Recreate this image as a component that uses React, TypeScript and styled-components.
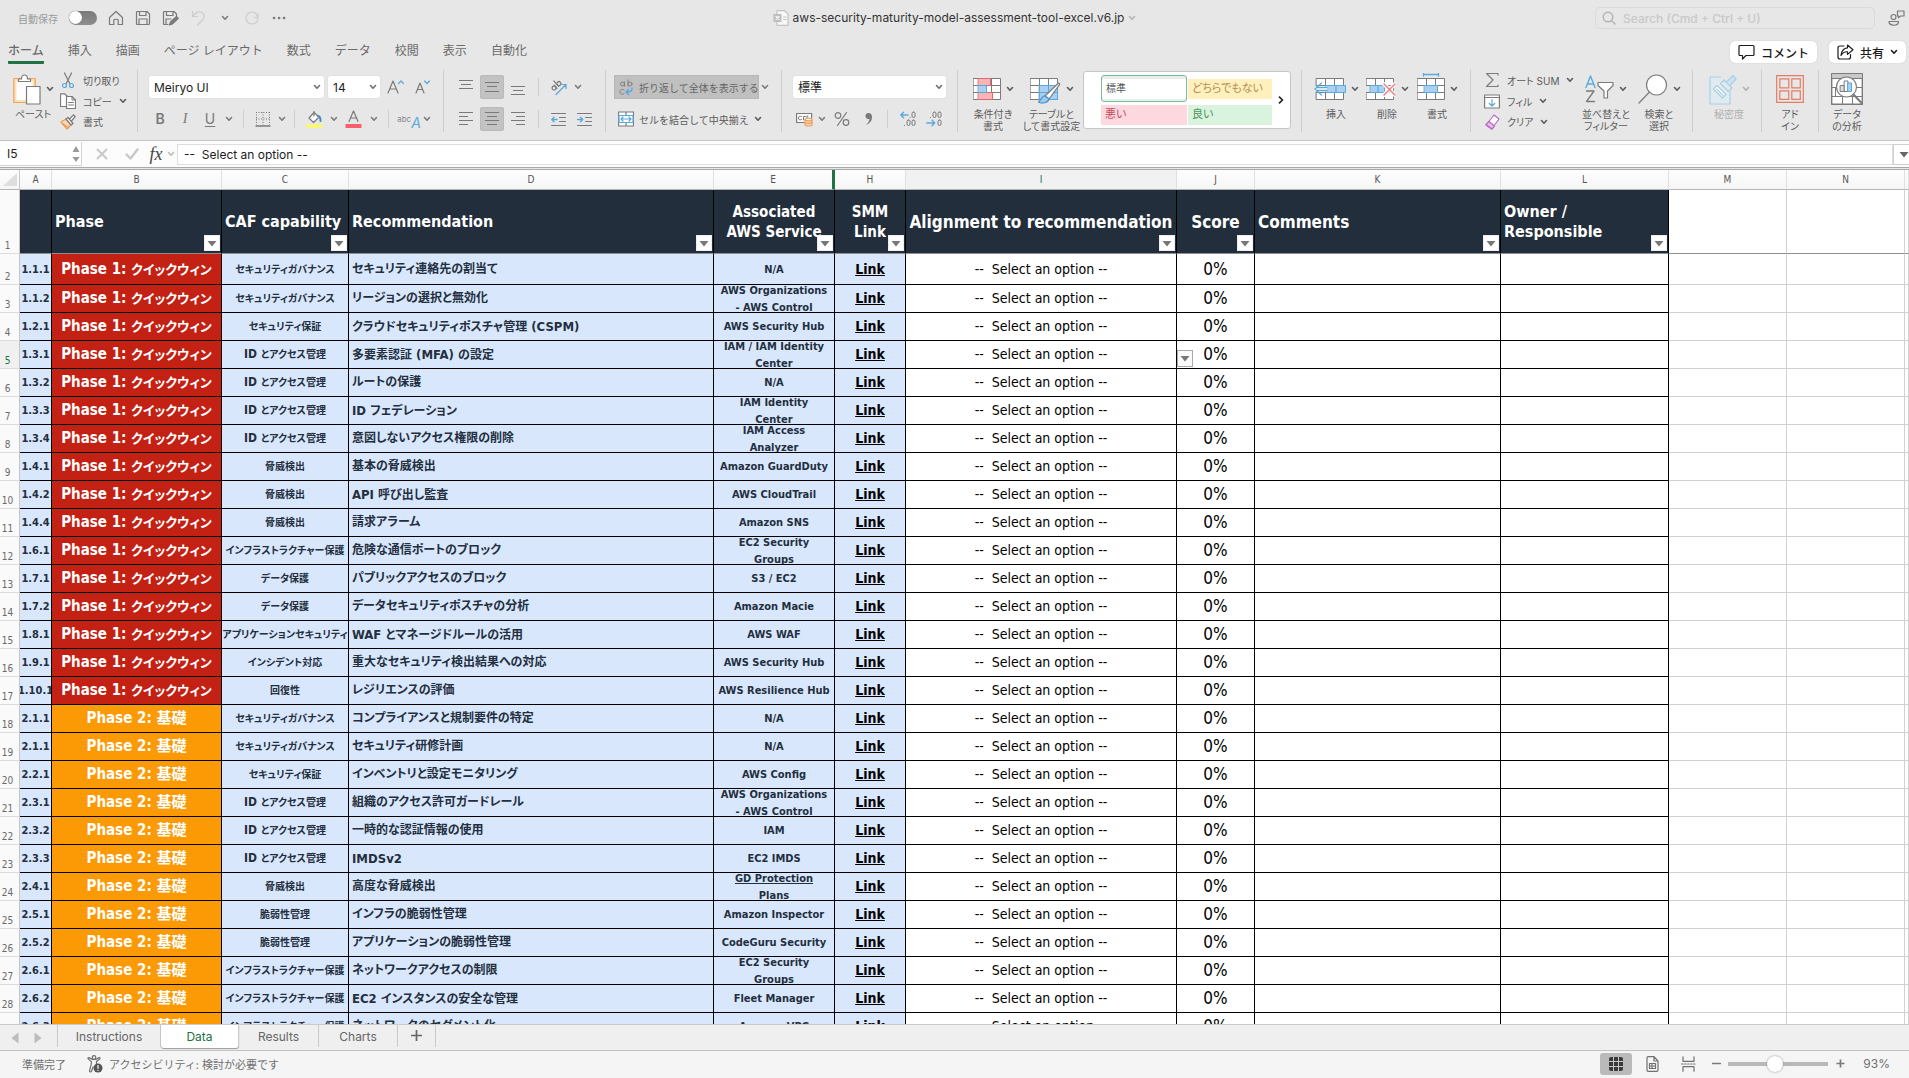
import React from "react";
import styled, { createGlobalStyle, css } from "styled-components";

const uiFont = `Inter, "Noto Sans CJK JP", sans-serif`;
const sheetFont = `"DejaVu Sans Condensed", "Noto Sans", "Noto Sans CJK JP", sans-serif`;

const GlobalStyle = createGlobalStyle`
  * { box-sizing: border-box; }
  body { margin: 0; background: #e7e7e7; font-family: ${uiFont}; font-feature-settings: "palt"; color: #5f5f5f; }
  button, input, select { font: inherit; font-feature-settings: inherit; color: inherit; margin: 0; }
  button { background: none; border: 0; padding: 0; }
`;

const Window = styled.div`
  display: flex;
  flex-direction: column;
  height: 100vh;
  overflow: hidden;
`;

/* ---------- title bar ---------- */

const TitleBar = styled.header`
  display: grid;
  grid-template-columns: 1fr auto 1fr;
  align-items: center;
  height: 36px;
  flex: none;
`;

const QuickAccess = styled.div`
  display: flex;
  align-items: center;
  gap: 11px;
  padding-left: 18px;
`;

const AutoSave = styled.label`
  display: flex;
  align-items: center;
  gap: 11px;
  font-size: 10px;
  color: #9a9a9a;
`;

const Toggle = styled.input`
  appearance: none;
  width: 28px;
  height: 14px;
  border-radius: 7px;
  background: linear-gradient(#787878, #8e8e8e);
  &::before {
    content: "";
    display: block;
    width: 13px;
    height: 13px;
    border-radius: 50%;
    background: #fff;
    box-shadow: 0 0 1px #555;
  }
`;

const IconButton = styled.button`
  display: flex;
  align-items: center;
  justify-content: center;
  min-width: 16px;
  height: 16px;
  color: #7a7a7a;
`;

const FaintButton = styled(IconButton)`
  color: #cdcdcd;
`;

const FileTitle = styled.h1`
  display: flex;
  align-items: center;
  gap: 4px;
  margin: 0;
  font-size: 12px;
  line-height: 14px;
  font-weight: 400;
  color: #333;
  > svg:last-child { color: #b4b4b4; }
`;

const TitleRight = styled.div`
  display: flex;
  align-items: center;
  justify-content: flex-end;
  gap: 13px;
  padding-right: 4px;
`;

const SearchBox = styled.label`
  display: flex;
  align-items: center;
  gap: 7px;
  width: 280px;
  height: 22px;
  padding: 0 6px;
  border: 1px solid #dadada;
  border-radius: 5px;
  color: #b5b5b5;
  input {
    flex: 1;
    min-width: 0;
    border: 0;
    background: none;
    outline: 0;
    padding: 0;
    font-size: 12px;
    font-weight: 500;
  }
  input::placeholder { color: #c9c9c9; }
`;

/* ---------- ribbon tabs ---------- */

const TabRow = styled.div`
  display: flex;
  justify-content: space-between;
  align-items: flex-start;
  height: 30px;
  flex: none;
  padding: 0 3px 0 8px;
  font-feature-settings: normal;
`;

const RibbonTabs = styled.nav`
  display: flex;
  gap: 24px;
`;

const RibbonTab = styled.button<{ $active?: boolean }>`
  height: 28px;
  font-size: 12px;
  line-height: 21px;
  padding-top: 4px;
  border-bottom: 3px solid ${(p) => (p.$active ? "#217346" : "transparent")};
  border-radius: 1px;
  font-weight: ${(p) => (p.$active ? 500 : 400)};
  color: #6b6b6b;
`;

const TabActions = styled.div`
  display: flex;
  gap: 12px;
  padding-top: 5px;
`;

const ActionButton = styled.button`
  display: flex;
  align-items: center;
  gap: 6px;
  height: 22px;
  padding: 0 8px;
  border-radius: 5px;
  background: #fff;
  color: #1c1c1c;
  font-size: 12px;
  font-weight: 500;
  white-space: nowrap;
  box-shadow: 0 0 1px #aaa;
`;

/* ---------- ribbon ---------- */

const Ribbon = styled.div`
  display: flex;
  height: 75px;
  flex: none;
  padding-top: 4px;
  border-bottom: 1px solid #c3c3c3;
  overflow: hidden;
`;

const Group = styled.section<{ $w?: number; $pad: number }>`
  display: flex;
  flex: none;
  width: ${(p) => (p.$w ? `${p.$w}px` : "auto")};
  height: 62px;
  padding-left: ${(p) => p.$pad}px;
  border-right: ${(p) => (p.$w ? "1px solid #cdcdcd" : "0")};
`;

const Rows = styled.div`
  display: flex;
  flex-direction: column;
  gap: 8px;
  padding-top: 5px;
`;

const Row = styled.div<{ $gap?: number }>`
  display: flex;
  align-items: center;
  gap: ${(p) => p.$gap || 0}px;
  height: 24px;
`;

const Tool = styled.button<{ $w: number; $on?: boolean }>`
  display: flex;
  align-items: center;
  justify-content: center;
  flex: none;
  width: ${(p) => p.$w}px;
  height: 24px;
  border-radius: 3px;
  color: #7a7a7a;
  ${(p) => p.$on && css`background: #c3c3c3; box-shadow: inset 0 0 2px #a8a8a8;`}
`;

const Sep = styled.span`
  flex: none;
  width: 12px;
  height: 18px;
  background: linear-gradient(#cfcfcf, #cfcfcf) center / 1px 100% no-repeat;
`;

const Picker = styled.label<{ $w: number }>`
  position: relative;
  display: block;
  flex: none;
  width: ${(p) => p.$w}px;
  height: 22px;
  background: #fff;
  border-radius: 2px;
  box-shadow: 0 0 1px #bbb;
  color: #1c1c1c;
  select {
    appearance: none;
    width: 100%;
    height: 100%;
    border: 0;
    background: none;
    padding: 0 5px;
    font-size: 12px;
    outline: 0;
  }
  svg {
    position: absolute;
    right: 3px;
    top: 8px;
    pointer-events: none;
    color: #6e6e6e;
  }
`;

const Stack = styled.div<{ $w: number }>`
  display: flex;
  flex-direction: column;
  flex: none;
  width: ${(p) => p.$w}px;
`;

const StackItem = styled.button`
  display: grid;
  grid-template-columns: 16px auto auto;
  justify-content: start;
  align-items: center;
  column-gap: 7px;
  height: 22px;
  font-size: 10px;
  color: #5c5c5c;
  white-space: nowrap;
`;

const BigButton = styled.button<{ $w: number; $off?: boolean }>`
  display: flex;
  flex-direction: column;
  align-items: center;
  flex: none;
  width: ${(p) => p.$w}px;
  font-size: 10px;
  line-height: 12px;
  color: ${(p) => (p.$off ? "#b0b0b0" : "#5c5c5c")};
  white-space: nowrap;
`;

const BigIcon = styled.span`
  display: flex;
  align-items: center;
  gap: 5px;
  height: 38px;
`;

const WrapButton = styled.button`
  display: flex;
  align-items: center;
  gap: 5px;
  height: 24px;
  width: 145px;
  padding-left: 5px;
  background: #c0c0c0;
  box-shadow: inset 0 0 2px #a5a5a5;
  font-size: 10px;
  font-feature-settings: normal;
  color: #666;
  white-space: nowrap;
`;

const MergeButton = styled(WrapButton)`
  background: none;
  box-shadow: none;
  width: auto;
  padding-left: 4px;
  color: #5c5c5c;
`;

const Gallery = styled.div`
  display: flex;
  align-items: center;
  flex: none;
  width: 208px;
  height: 58px;
  margin-top: 1px;
  padding-left: 17px;
  background: #fff;
  border: 1px solid #c6c6c6;
  border-radius: 3px;
`;

const Swatches = styled.div`
  display: grid;
  grid-template-columns: 86px 84px;
  grid-template-rows: 27px 20px;
  gap: 3px 1px;
  align-items: center;
`;

const Swatch = styled.button<{ $bg: string; $fg: string; $picked?: boolean }>`
  height: ${(p) => (p.$picked ? 27 : 20)}px;
  padding: 0 4px 2px;
  text-align: left;
  font-size: ${(p) => (p.$picked ? 10 : 11)}px;
  line-height: 18px;
  background: ${(p) => p.$bg};
  color: ${(p) => p.$fg};
  ${(p) => p.$picked && css`border: 1px solid #7dba98; border-radius: 3px; box-shadow: inset 0 3px #e6efe9, inset 0 -2px #e6efe9;`}
`;

const GalleryNext = styled.button`
  flex: 1;
  display: flex;
  justify-content: center;
  color: #222;
`;

/* ---------- formula bar ---------- */

const FormulaBar = styled.div`
  display: flex;
  align-items: center;
  height: 27px;
  flex: none;
  background: #fcfcfc;
  border-bottom: 1px solid #a9a9a9;
  color: #1c1c1c;
`;

const NameBox = styled.label`
  display: flex;
  align-items: center;
  width: 82px;
  height: 24px;
  padding: 0 1px 0 7px;
  background: #fff;
  border-right: 1px solid #d2d2d2;
  border-bottom: 1px solid #d2d2d2;
  color: #999;
  input {
    flex: 1;
    min-width: 0;
    border: 0;
    padding: 0;
    font-size: 12px;
    color: #1c1c1c;
    outline: 0;
    background: none;
  }
`;

const FormulaTools = styled.div`
  display: flex;
  align-items: center;
  padding-left: 5px;
  button:last-child { color: #bcbcbc; }
`;

const FormulaInput = styled.input`
  flex: 1;
  min-width: 0;
  height: 21px;
  border: 1px solid #dedede;
  background: #fff;
  padding: 0 6px;
  font-size: 12px;
  outline: 0;
  white-space: pre;
`;

const Expand = styled.button`
  width: 16px;
  height: 21px;
  border: 1px solid #cfcfcf;
  border-right: 0;
  background: #fff;
  display: flex;
  align-items: center;
  justify-content: flex-end;
  overflow: hidden;
  color: #666;
`;

/* ---------- sheet ---------- */

const SheetArea = styled.main`
  flex: 1;
  min-height: 0;
  overflow: hidden;
  background: #fff;
  border-top: 1px solid #a9a9a9;
  margin-top: 1px;
  font-family: ${sheetFont};
`;

const Grid = styled.table`
  width: 100%;
  table-layout: fixed;
  border-collapse: separate;
  border-spacing: 0;
`;

const ColHead = styled.th<{ $on?: boolean }>`
  height: 20px;
  padding: 0;
  font-size: 10px;
  font-weight: 400;
  line-height: 18px;
  color: ${(p) => (p.$on ? "#217346" : "#555")};
  background: ${(p) => (p.$on ? "#f1f1f1" : "linear-gradient(#fdfdfd, #f6f6f6)")};
  border-right: 1px solid #e0e0e0;
  border-bottom: 1px solid #b4b4b4;
`;

const HiddenEdge = styled(ColHead)`
  border-right: 3px solid #217346;
`;

const Corner = styled(ColHead)`
  border-right-color: #c6c6c6;
  text-align: right;
  svg { display: block; margin-left: 3px; }
`;

const RowHead = styled.th<{ $on?: boolean }>`
  padding: 0 4px 0 0;
  vertical-align: bottom;
  font-size: 10px;
  line-height: 14px;
  font-weight: 400;
  color: ${(p) => (p.$on ? "#217346" : "#6a6a6a")};
  background: ${(p) => (p.$on ? "#f0f0f0" : "#fafafa")};
  border-right: 1px solid #c6c6c6;
  border-bottom: 1px solid #dcdcdc;
`;

const HeadCell = styled.th<{ $center?: boolean; $size?: number }>`
  position: relative;
  height: 64px;
  padding: 0 3px;
  background: #222e3b;
  border-right: 1px solid #000;
  border-bottom: 1px solid #8f8f8f;
  color: #fff;
  font-size: ${(p) => p.$size || 16}px;
  line-height: 20px;
  font-weight: 700;
  text-align: ${(p) => (p.$center ? "center" : "left")};
`;

const FilterButton = styled.button`
  position: absolute;
  right: 1px;
  bottom: 2px;
  width: 16px;
  height: 16px;
  display: flex;
  align-items: center;
  justify-content: center;
  background: #fff;
  border: 1px solid #eee;
  color: #777;
`;

const Cell = styled.td<{ $bg?: string; $fg?: string }>`
  position: relative;
  padding: 0;
  border-right: 1px solid #000;
  border-bottom: 1px solid #000;
  background: ${(p) => p.$bg || "#fff"};
  color: ${(p) => p.$fg || "#232f3e"};
`;

const Blank = styled.td<{ $head?: boolean }>`
  padding: 0;
  border-right: 1px solid #d0d0d0;
  border-bottom: 1px solid ${(p) => (p.$head ? "#8f8f8f" : "#d0d0d0")};
`;

const Content = styled.div<{ $h: number; $size: number; $bold?: boolean; $left?: boolean; $wrap?: boolean }>`
  display: flex;
  align-items: center;
  justify-content: ${(p) => (p.$left ? "flex-start" : "center")};
  height: ${(p) => p.$h}px;
  padding: 0 ${(p) => (p.$left ? 3 : 0)}px;
  overflow: hidden;
  font-size: ${(p) => p.$size}px;
  font-weight: ${(p) => (p.$bold ? 700 : 400)};
  line-height: 17px;
  text-align: center;
  white-space: ${(p) => (p.$wrap ? "pre-line" : "pre")};
  a { color: inherit; }
`;

const Run = styled.span<{ $size: number }>`
  font-size: ${(p) => p.$size}px;
`;

const CellDropdown = styled.button`
  position: absolute;
  left: 0;
  top: 9px;
  z-index: 1;
  width: 16px;
  height: 17px;
  display: flex;
  align-items: center;
  justify-content: center;
  background: #fafafa;
  border: 1px solid #aaa;
  color: #777;
`;

/* ---------- bottom bars ---------- */

const SheetTabs = styled.nav`
  display: flex;
  align-items: flex-start;
  height: 26px;
  flex: none;
  background: #efefef;
  border-top: 1px solid #cacaca;
`;

const TabArrows = styled.div`
  display: flex;
  align-items: center;
  gap: 7px;
  width: 58px;
  height: 22px;
  padding: 4px 0 0 7px;
  border-right: 1px solid #cacaca;
  button { color: #bdbdbd; }
`;

const SheetTab = styled.button<{ $w: number; $active?: boolean }>`
  width: ${(p) => p.$w}px;
  height: ${(p) => (p.$active ? 23 : 22)}px;
  font-size: 12px;
  color: ${(p) => (p.$active ? "#217346" : "#666")};
  background: ${(p) => (p.$active ? "#fff" : "none")};
  border-right: 1px solid #cacaca;
  ${(p) => p.$active && css`border-radius: 0 0 3px 3px; box-shadow: 0 1px 1px #999;`}
`;

const StatusBar = styled.footer`
  display: flex;
  align-items: center;
  justify-content: space-between;
  height: 28px;
  flex: none;
  padding: 0 19px 2px 22px;
  background: #f5f5f5;
  border-top: 1px solid #c3c3c3;
  font-size: 11px;
  font-feature-settings: normal;
  color: #707070;
`;

const StatusLeft = styled.div`
  display: flex;
  align-items: center;
  gap: 21px;
  button { display: flex; align-items: center; gap: 6px; }
`;

const StatusRight = styled.div`
  display: flex;
  align-items: center;
  gap: 4px;
`;

const ViewButton = styled.button<{ $on?: boolean }>`
  display: flex;
  align-items: center;
  justify-content: center;
  width: 32px;
  height: 22px;
  border-radius: 3px;
  background: ${(p) => (p.$on ? "#bababa" : "none")};
  color: ${(p) => (p.$on ? "#3a3a3a" : "#707070")};
`;

const ZoomSlider = styled.input`
  appearance: none;
  width: 100px;
  height: 16px;
  background: linear-gradient(#b9b9b9, #b9b9b9) center / 100% 4px no-repeat;
  border-radius: 2px;
  &::-webkit-slider-thumb {
    appearance: none;
    width: 16px;
    height: 16px;
    border-radius: 50%;
    background: #fff;
    box-shadow: 0 0 2px #888;
  }
`;

const ZoomValue = styled.output`
  width: 38px;
  text-align: right;
  font-size: 12px;
`;

/* ---------- drawings ---------- */

const BLUE = "#5aa9dd";
const G = "#7b7b7b";

const Drawing = styled.svg`
  flex: none;
  fill: none;
  stroke-linecap: round;
  stroke-linejoin: round;
`;

function Svg({ w, h, children, stroke = "currentColor" }: { w: number; h: number; children: React.ReactNode; stroke?: string }) {
  return (
    <Drawing width={w} height={h} viewBox={`0 0 ${w} ${h}`} stroke={stroke} strokeWidth="1.2" aria-hidden="true">
      {children}
    </Drawing>
  );
}

const Chevron = () => <Svg w={8} h={6}><path d="M1.5 1.5 4 4.2 6.500 1.500" strokeWidth="1.6" /></Svg>;
const Triangle = () => <Svg w={10} h={7}><path d="M.5 1h9L5 6.500z" fill="currentColor" stroke="none" /></Svg>;

const Lines = ({ rows, ys }: { rows: [number, number][]; ys: number[] }) => (
  <Svg w={14} h={16}>{rows.map(([a, b], i) => <path key={i} d={`M${a} ${ys[i]}H${b}`} strokeWidth="1" strokeLinecap="butt" />)}</Svg>
);

const Table = ({ x = 0, y = 0 }: { x?: number; y?: number }) => (
  <g transform={`translate(${x} ${y})`} stroke={G} strokeWidth="1">
    <path d="M.5.5h27v21H.5z" fill="#fff" />
    <path d="M.5 7.500h27M.5 14.500h27M9.500.5v21M18.500.5v21" />
  </g>
);

const PasteIcon = () => (
  <Svg w={28} h={31}>
    <path d="M.8 4.500h21.500v24H.8z" stroke="#efa45f" fill="#fbe3b6" />
    <path d="M3.500 7h16v19h-16z" fill="#fff" stroke="none" />
    <path d="M5.500 7.500V5h3C8.500 2 9.500 1 11.500 1s3 1 3 4h3v2.500z" stroke={G} fill="#fff" />
    <path d="M13.500 12.500h13.500v17.500H13.500z" stroke={G} fill="#fff" />
  </Svg>
);
const CutIcon = () => (
  <Svg w={16} h={17}>
    <path d="M4.500 1l5.500 11M11.500 1L6 12" stroke={G} />
    <circle cx="4.500" cy="13.500" r="2" stroke={BLUE} /><circle cx="11.500" cy="13.500" r="2" stroke={BLUE} />
  </Svg>
);
const CopyIcon = () => (
  <Svg w={16} h={16} stroke={G}>
    <path d="M5.500 13.500h-5V.8h4L7 3" fill="#fff" />
    <path d="M6.500 3.500h5.500l3.500 3.500v8.500h-9z" fill="#fff" /><path d="M12 3.500V7h3.500M8.500 9.500h5M8.500 12h5" strokeWidth="1" />
  </Svg>
);
const BrushIcon = () => (
  <Svg w={16} h={16}>
    <path d="M1 8l5-3 5 6-4 4z" fill="#fbd9b4" stroke="#eb9a56" /><path d="M3 10l5 3" stroke="#eb9a56" />
    <path d="M6 5l2-1.500 5 6-2 1.500zM9.500 5l4-4.200 1.700 1.700-3.700 4.500" fill="#fff" stroke={G} />
  </Svg>
);
const FontStep = ({ up }: { up?: boolean }) => (
  <Svg w={17} h={16}>
    <path d={up ? "M1 14 6 2l5 12M2.700 10h6.600" : "M2 14 6 4l4 10M3.500 10.500h5"} />
    <path d={up ? "M11.500 4.500 14 2l2.500 2.500" : "M10.500 2 13 4.500 15.500 2"} stroke={BLUE} />
  </Svg>
);
const Letter = styled.span<{ $k: "b" | "i" | "u" }>`
  font-size: 14px;
  line-height: 16px;
  font-weight: ${(p) => (p.$k === "b" ? 600 : 400)};
  font-style: ${(p) => (p.$k === "i" ? "italic" : "normal")};
  font-family: ${(p) => (p.$k === "i" ? `"Liberation Serif", serif` : "inherit")};
  text-decoration: ${(p) => (p.$k === "u" ? "underline" : "none")};
  text-underline-offset: 2px;
`;
const BorderIcon = () => (
  <Svg w={16} h={16}><path d="M1 1.500h14M1 8h14M1.500 1v13M8 1v13M14.500 1v13" strokeDasharray="1 1.500" strokeLinecap="butt" strokeWidth="1" /><path d="M.5 15h15" strokeWidth="1.500" strokeLinecap="butt" /></Svg>
);
const FillIcon = () => (
  <Svg w={17} h={18}>
    <path d="M8 2.500 3 8l4.500 4.500L13 7z" fill="#fff" /><path d="M8 6V1.500" /><path d="M12 6c2 0 2.500 2 2.500 5" stroke="#4d86c4" strokeWidth="2" />
    <path d="M.5 16h16" stroke="#fbf57c" strokeWidth="4" strokeLinecap="butt" />
  </Svg>
);
const FontColorIcon = () => (
  <Svg w={17} h={18}><path d="M4 11.500 8.500 1 13 11.500M5.500 8h6" /><path d="M.5 16h16" stroke="#f9606c" strokeWidth="4" strokeLinecap="butt" /></Svg>
);
const TextStyle = styled.span`
  display: flex;
  align-items: center;
  padding-left: 5px;
  font-size: 8px;
  line-height: 8px;
  color: #888;
  i {
    padding-top: 8px;
    font-size: 14px;
    line-height: 14px;
    color: ${BLUE};
  }
`;
const OrientIcon = () => (
  <Svg w={17} h={17}>
    <g transform="rotate(-42 7 7)"><circle cx="3.500" cy="6.500" r="2" /><path d="M5.500 4.500v4.300M8 1v7.500" /><circle cx="10" cy="6.500" r="2" /></g>
    <path d="M6 15.500 16 5.500M12 5.500h4v4" stroke={BLUE} />
  </Svg>
);
const IndentIcon = ({ out }: { out?: boolean }) => (
  <Svg w={15} h={15}><path d="M.5 1.500h14M8.500 5.500h6M8.500 9.500h6M.5 13.500h14" strokeWidth="1" /><path d={out ? "M6 7.500H.8M3 5.300.8 7.500 3 9.700" : "M.5 7.500h5.200M3.500 5.300l2.200 2.200-2.200 2.200"} stroke={BLUE} strokeWidth="1.400" /></Svg>
);
const WrapIcon = () => (
  <Svg w={15} h={17}>
    <g stroke="#828282" strokeWidth="1"><circle cx="3.500" cy="5" r="2" /><path d="M5.500 3v4.200M9 .8v6.400" /><circle cx="11" cy="5" r="2" /><path d="M5 11c-1.500-1.500-4-.5-4 1.800S3.500 16 5 14.500" /></g>
    <path d="M13 9c.5 3-1.500 4-5.500 4M9.500 10.500 7 13l2.500 2.500" stroke={BLUE} strokeWidth="1.500" />
  </Svg>
);
const MergeIcon = () => (
  <Svg w={16} h={16} stroke={G}><path d="M.5 1h15v14H.5zM8 1v3M8 12v3" fill="#fff" /><path d="M1 4.500h14v7H1z" fill="#fff" stroke={BLUE} /><path d="M3 8h10M5 6 3 8l2 2M11 6l2 2-2 2" stroke={BLUE} /></Svg>
);
const MoneyIcon = () => (
  <Svg w={17} h={15} stroke={G}>
    <path d="M8 10.500H.6V1.500h15v4" fill="#fff" /><path d="M5.500 4.500c-2-1-3 0-3 1.500s1 2.500 3 1.500M7.500 8V4.500h2M12 4h-1v2.500" strokeWidth="1" />
    <path d="M9 7.500v5c0 2 7 2 7 0v-5" fill="#fbdcbd" stroke="#ee9c5c" /><ellipse cx="12.500" cy="7.500" rx="3.500" ry="1.300" fill="#fff" stroke="#ee9c5c" /><path d="M9 10c0 1.800 7 1.800 7 0" stroke="#ee9c5c" />
  </Svg>
);
const PercentIcon = () => <Svg w={16} h={16}><circle cx="4" cy="4.500" r="2.800" /><circle cx="12" cy="11.500" r="2.800" /><path d="M12.500 1.500 3.500 14.500" /></Svg>;
const CommaIcon = () => <Svg w={9} h={14}><path d="M4.500 1a3 3 0 1 0 0 6q.6 0 1-.2C5.300 9 4.300 11 2 12.700 6 11.500 8 8.500 8 5c0-2.500-1.500-4-3.500-4z" fill="currentColor" stroke="none" /></Svg>;
const DecimalIcon = ({ less }: { less?: boolean }) => (
  <Svg w={17} h={16}>
    <g strokeWidth="1"><rect x="12" y="1" width="3" height="5.500" rx="1.500" /><rect x="12" y="9" width="3" height="5.500" rx="1.500" />
      {less ? <rect x="7" y="1" width="3" height="5.500" rx="1.500" /> : <rect x="7" y="9" width="3" height="5.500" rx="1.500" />}
      <path d={less ? "M4.500 6.500h.1" : "M4.500 14.500h.1M10 6.500h.1"} /></g>
    <path d={less ? "M.8 12h8M6 9.300 8.800 12 6 14.700" : "M8 4H.8M3.500 1.300.8 4l2.700 2.700"} stroke={BLUE} strokeWidth="1.400" />
  </Svg>
);
const CondIcon = () => (
  <Svg w={28} h={22}><Table /><path d="M5.500.5h12v7h-12zM5.500 14.500h14v7h-14z" fill="#fbb4b8" stroke="#e0686e" strokeWidth="1" /><path d="M5.500 7.500h8v7h-8z" fill="#a9d0f2" stroke={BLUE} strokeWidth="1" /></Svg>
);
const TableIcon = () => (
  <Svg w={31} h={32}><g transform="translate(0 3)"><Table y={2} /><path d="M9.500 9.500h18v14h-18z" fill="#a9d0f2" stroke={BLUE} strokeWidth="1" /><path d="M18.500 9.500v14M9.500 16.500h18" stroke={BLUE} strokeWidth="1" />
    <path d="M15 20 28 7.500c1-.7 2 0 1.500 1.200L19 23z" fill="#fff" stroke={G} /><path d="M15 20c-3-.5-3 3-6.500 6 3 2 9.500 1 10.500-3z" fill="#9ccbf0" stroke="#4a93cf" /></g></Svg>
);
const InsertIcon = () => (
  <Svg w={32} h={22}><Table x={2} /><path d="M12 7.500h19.500v7H12z" fill="#a9d0f2" stroke={BLUE} strokeWidth="1" /><path d="M22 7.500v7" stroke={BLUE} /><path d="M1 8.500v5h12v-5z" fill="#fff" stroke="none" /><path d="M13 9.500H3.500M13 12.500H3.500M7.500 5 1 11l6.500 6" stroke={BLUE} strokeWidth="1.300" /></Svg>
);
const DeleteIcon = () => (
  <Svg w={30} h={22}><Table /><path d="M0 8h4v6H0z" fill="#e7e7e7" stroke="none" /><path d="M4.500 7.500h14v7h-14z" fill="#a9d0f2" stroke={BLUE} strokeWidth="1" /><path d="M12 7.500v7" stroke={BLUE} /><path d="M18 6l11 11M29 6 18 17" stroke="#fff" strokeWidth="4" /><path d="M18 6l11 11M29 6 18 17" stroke="#f08080" strokeWidth="1.500" /></Svg>
);
const FormatIcon = () => (
  <Svg w={28} h={32}><Table y={5} /><path d="M7.500 12.500h13v7h-13z" fill="#a9d0f2" stroke={BLUE} strokeWidth="1" /><path d="M6.500 1.500h15M6.500 0v3M21.500 0v3" stroke={BLUE} strokeWidth="1.300" /></Svg>
);
const SumIcon = () => <Svg w={16} h={16} stroke={G}><path d="M14 3V1.500H2.500L9 8l-6.500 6.500H14V13" /></Svg>;
const FillDownIcon = () => <Svg w={16} h={15}><path d="M.6 1h14.800v13H.6zM.6 3.500h14.800" fill="#fff" stroke={G} /><path d="M8 5.500V12M5.300 9.500 8 12l2.700-2.500" stroke={BLUE} /></Svg>;
const ClearIcon = () => <Svg w={16} h={16}><path d="M10 1l5 4-7.500 10-5.500-4z" fill="#fff" stroke="#b96cc4" /><path d="M5 7.500 10.500 12 8 15l-6-4.500z" fill="#e4bde9" stroke="#b96cc4" /></Svg>;
const SortIcon = () => (
  <Svg w={29} h={28}><path d="M1 12.500 5.500 1 10 12.500M2.700 9h5.600" stroke={BLUE} strokeWidth="1.400" /><path d="M1.500 16h7.500L1.500 26.500H9.500" stroke={G} strokeWidth="1.300" /><path d="M13 7.500h15v3l-5.500 5.500v7h-3.500v-7L13 10.500z" fill="#fff" stroke={G} /></Svg>
);
const FindIcon = () => <Svg w={30} h={30} stroke={G}><circle cx="18.500" cy="11" r="10" fill="#fff" /><path d="M11.500 18 1 29" /></Svg>;
const SensitivityIcon = () => (
  <Svg w={28} h={31} stroke="#a9cfe4"><path d="M12 3H1v27h20V18" fill="#e0ebf0" /><path d="M4.500 15 8 11.500l9 9L13.500 24z" fill="#fff" /><path d="M7.500 15l6.500 6.500" /><path d="M11.500 9.500 15 6l8 8-3.500 3.500z" fill="#e0ebf0" /><path d="M17.500 8 24 1.500 27 5l-6 6.500" fill="#cfe3ee" /></Svg>
);
const AddinIcon = () => <Svg w={28} h={28} stroke="#e57b63"><path d="M.7.700h26.600v26.600H.7zM3.800 3.800h9v9h-9zM15.800 3.800h8.500v9h-8.500zM3.800 15.800h9v8.500h-9zM15.800 15.800h8.500v8.500h-8.500z" strokeLinejoin="miter" /></Svg>;
const AnalyzeIcon = () => (
  <Svg w={32} h={32} stroke={G}><path d="M.7.700h30.600v30.600H.7z" fill="#fff" strokeWidth="1.400" /><path d="M1 1h30v4H1z" fill="#c9c9c9" stroke="none" /><path d="M1 5.500h30M1 14.500h30M1 23.500h30M11.500 23v8M21.500 23v8M4.500 14.500v9" strokeWidth="1" />
    <circle cx="15.500" cy="14" r="10" fill="#fff" /><path d="M22.500 21.500 31 30.500" strokeWidth="2" /><path d="M9.500 12.500h4v6h-4z" fill="#ddd" strokeWidth="1" /><path d="M13.500 8h3.500v10.500h-3.500z" fill="#fff" strokeWidth="1" /><path d="M17 10h3.500v8.500H17z" fill="#a9d0f2" stroke={BLUE} strokeWidth="1" /></Svg>
);
const HomeIcon = () => <Svg w={16} h={16}><path d="M1.500 7.500 8 1.500l6.500 6v7h-4.300V10c0-1-4.400-1-4.400 0v4.500H1.500z" /></Svg>;
const SaveIcon = () => <Svg w={16} h={16}><path d="M1.500 2.500q0-1 1-1H12l2.500 2.500v9.500q0 1-1 1h-11q-1 0-1-1zM4.500 1.500v4h6.500v-4M4 14.500V9h8v5.500" /></Svg>;
const SaveEditIcon = () => <Svg w={17} h={16}><path d="M6 14.500H2.500q-1 0-1-1v-11q0-1 1-1H12l2.500 2.500v2M4.500 1.500v4h6.500v-4M4 14.500V9h5" /><path d="M7.500 15l1-3 6-5.500 1.800 1.800-6 5.700z" fill="currentColor" /></Svg>;
const UndoIcon = () => <Svg w={15} h={16}><path d="M1.500 1.500v5h5M1.500 6.500C5 1.500 9 1 11.500 3s2 5 0 7L6.500 15" /></Svg>;
const RedoIcon = () => <Svg w={16} h={16}><path d="M14 4v3.500h-3.500M14 7.500C13 4 11 2 8 2a6 6 0 1 0 6 6" /></Svg>;
const DotsIcon = () => <Svg w={14} h={4}><path d="M2 2h.1M7 2h.1M12 2h.1" strokeWidth="2.600" /></Svg>;
const FileIcon = () => <Svg w={16} h={16} stroke="#c4c4c4"><path d="M4 .7h7.500L15 4v11.300H4z" fill="#f7f7f7" /><path d="M10.500 7h2.500M10.500 9.500h2.500" /><path d="M.5 4h8v8h-8z" fill="#bdbdbd" stroke="none" /><path d="M3 6.500l3 3.200M6 6.500 3 9.700" stroke="#fff" /></Svg>;
const SearchIcon = () => <Svg w={14} h={14}><circle cx="6" cy="6" r="4.800" strokeWidth="1.500" /><path d="M9.700 9.700 13 13" strokeWidth="1.500" /></Svg>;
const PeopleIcon = () => <Svg w={17} h={17}><circle cx="5.500" cy="7" r="2.500" /><path d="M1 11.500h9.500c0 5-9.500 5-9.500 0zM9.500 1h6.500v5h-3.500l-2 1.700V6H9.500z" /></Svg>;
const CommentIcon = () => <Svg w={17} h={16}><path d="M2 1.500h13q1 0 1 1v8q0 1-1 1H8L4.500 15v-3.500H2q-1 0-1-1v-8q0-1 1-1z" /></Svg>;
const ShareIcon = () => <Svg w={17} h={16}><path d="M7 2H3Q1 2 1 4v9q0 2 2 2h8.500q2 0 2-2v-2.500" /><path d="M10.500 1l5.500 4.700-5.500 4.700V7.800C7.500 7.500 5.500 9 4 11.500c.5-4 2.500-7.500 6.500-7.700z" /></Svg>;
const Spinner = () => <Svg w={8} h={18}><path d="M.5 7 4 1l3.500 6zM.5 12h7L4 17z" fill="currentColor" stroke="none" /></Svg>;
const CancelIcon = () => <Svg w={12} h={12} stroke="#c8c8c8"><path d="M1.500 1.500l9 9M10.500 1.500l-9 9" strokeWidth="2" /></Svg>;
const EnterIcon = () => <Svg w={14} h={12} stroke="#c8c8c8"><path d="M1.500 6.500l4 4 7-9" strokeWidth="2.400" /></Svg>;
const Fx = styled.span`
  font: italic 18px/20px "Liberation Serif", serif;
  color: #444;
`;
const Arrow = ({ back }: { back?: boolean }) => <Svg w={8} h={12}><path d={back ? "M7.500.5v11L.5 6z" : "M.5.5v11l7-5.500z"} fill="currentColor" stroke="none" /></Svg>;
const PlusIcon = ({ s = 11 }: { s?: number }) => <Svg w={11} h={11}><path d={`M${5.5 - s / 2} 5.500h${s}M5.500 ${5.5 - s / 2}v${s}`} strokeWidth="1.700" strokeLinecap="butt" /></Svg>;
const MinusIcon = () => <Svg w={9} h={11}><path d="M.5 5.500h8" strokeWidth="1.500" /></Svg>;
const A11yIcon = () => <Svg w={16} h={18}><circle cx="7" cy="2.500" r="1.800" /><path d="M1 3.500c0-1.500 1-1 4 .8h4c3-1.800 4-2.300 4-.8 0 1-3 2-3.500 3v2.500M1 3.500c0 1 3.500 2 3.500 3.500 0 3-2 8-2 9s1.500 1.500 2 .3L6 12" /><circle cx="11" cy="13" r="4.500" fill="#555" stroke="none" /><path d="M11 10.500v2.800M11 15.300v.1" stroke="#fff" /></Svg>;
const GridViewIcon = () => <Svg w={14} h={14}><rect x="0" y="0" width="14" height="14" rx="2" fill="currentColor" stroke="none" /><path d="M0 4.500h14M0 9.500h14M4.500 0v14M9.500 0v14" stroke="#c8c8c8" strokeWidth="1" /></Svg>;
const PageViewIcon = () => <Svg w={13} h={16}><path d="M1 2q0-1.300 1.300-1.300H8L12 5v9q0 1.300-1.300 1.300H2.300Q1 15.300 1 14zM8 1v4h4M3.500 7.500h6v5h-6zM3.500 10h6M6 7.500v5" /></Svg>;
const BreakViewIcon = () => <Svg w={15} h={16}><path d="M2 .8v4.500h11V.8M2 15.200v-4.500h11v4.500" /><path d="M.5 8h14" strokeDasharray="1.500 1.500" /></Svg>;

/* ---------- data ---------- */

const P1 = "クイックウィン";
const P2 = "基礎";
const GOV = "セキュリティガバナンス";
const ASSURE = "セキュリティ保証";
const IAM = "ID とアクセス管理";
const THREAT = "脅威検出";
const INFRA = "インフラストラクチャー保護";
const DATA = "データ保護";
const VULN = "脆弱性管理";

type Item = [id: string, phase: 1 | 2, capability: string, recommendation: string, service: string];

const items: Item[] = [
  ["1.1.1", 1, GOV, "セキュリティ連絡先の割当て", "N/A"],
  ["1.1.2", 1, GOV, "リージョンの選択と無効化", "AWS Organizations\n- AWS Control"],
  ["1.2.1", 1, ASSURE, "クラウドセキュリティポスチャ管理 (CSPM)", "AWS Security Hub"],
  ["1.3.1", 1, IAM, "多要素認証 (MFA) の設定", "IAM / IAM Identity\nCenter"],
  ["1.3.2", 1, IAM, "ルートの保護", "N/A"],
  ["1.3.3", 1, IAM, "ID フェデレーション", "IAM Identity\nCenter"],
  ["1.3.4", 1, IAM, "意図しないアクセス権限の削除", "IAM Access\nAnalyzer"],
  ["1.4.1", 1, THREAT, "基本の脅威検出", "Amazon GuardDuty"],
  ["1.4.2", 1, THREAT, "API 呼び出し監査", "AWS CloudTrail"],
  ["1.4.4", 1, THREAT, "請求アラーム", "Amazon SNS"],
  ["1.6.1", 1, INFRA, "危険な通信ポートのブロック", "EC2 Security\nGroups"],
  ["1.7.1", 1, DATA, "パブリックアクセスのブロック", "S3 / EC2"],
  ["1.7.2", 1, DATA, "データセキュリティポスチャの分析", "Amazon Macie"],
  ["1.8.1", 1, "アプリケーションセキュリティ", "WAF とマネージドルールの活用", "AWS WAF"],
  ["1.9.1", 1, "インシデント対応", "重大なセキュリティ検出結果への対応", "AWS Security Hub"],
  ["1.10.1", 1, "回復性", "レジリエンスの評価", "AWS Resilience Hub"],
  ["2.1.1", 2, GOV, "コンプライアンスと規制要件の特定", "N/A"],
  ["2.1.1", 2, GOV, "セキュリティ研修計画", "N/A"],
  ["2.2.1", 2, ASSURE, "インベントリと設定モニタリング", "AWS Config"],
  ["2.3.1", 2, IAM, "組織のアクセス許可ガードレール", "AWS Organizations\n- AWS Control"],
  ["2.3.2", 2, IAM, "一時的な認証情報の使用", "IAM"],
  ["2.3.3", 2, IAM, "IMDSv2", "EC2 IMDS"],
  ["2.4.1", 2, THREAT, "高度な脅威検出", "GD Protection\nPlans"],
  ["2.5.1", 2, VULN, "インフラの脆弱性管理", "Amazon Inspector"],
  ["2.5.2", 2, VULN, "アプリケーションの脆弱性管理", "CodeGuru Security"],
  ["2.6.1", 2, INFRA, "ネットワークアクセスの制限", "EC2 Security\nGroups"],
  ["2.6.2", 2, INFRA, "EC2 インスタンスの安全な管理", "Fleet Manager"],
  ["2.6.3", 2, INFRA, "ネットワークのセグメント化", "Amazon VPC"],
];

const columns: [letter: string, width: number | undefined][] = [
  ["A", 32], ["B", 170], ["C", 127], ["D", 365], ["E", 121], ["H", 71], ["I", 271],
  ["J", 78], ["K", 246], ["L", 168], ["M", 118], ["N", 118], ["", undefined],
];

const headings: [text: React.ReactNode, center: boolean, size: number][] = [
  ["Phase", false, 16], ["CAF capability", false, 16], ["Recommendation", false, 16],
  [<>Associated<br />AWS Service</>, true, 15], [<>SMM<br />Link</>, true, 15],
  ["Alignment to recommendation", true, 17], ["Score", true, 17], ["Comments", false, 17],
  [<>Owner /<br />Responsible</>, false, 16],
];

const LIGHT = "#d9e7fd";

/* Latin runs are set a step larger than the kana and kanji round them. */
function Mixed({ text, latin }: { text: string; latin: number }) {
  return (
    <span>
      {text.split(/([A-Za-z0-9() ]+)/).filter(Boolean).map((part, i) =>
        /^[A-Za-z0-9() ]/.test(part) ? <Run key={i} $size={latin}>{part}</Run> : part)}
    </span>
  );
}

function DataRow({ item, n }: { item: Item; n: number }) {
  const [id, phase, capability, recommendation, service] = item;
  const h = n === 2 ? 30 : 27;
  const selected = n === 5;
  return (
    <tr>
      <RowHead scope="row" $on={selected}>{n}</RowHead>
      <Cell $bg={LIGHT}><Content $h={h} $size={11} $bold>{id}</Content></Cell>
      <Cell $bg={phase === 1 ? "#c22114" : "#fb9a05"} $fg="#fff">
        <Content $h={h} $size={phase === 1 ? 13 : 15} $bold>
          <span><Run $size={15}>{`Phase ${phase}: `}</Run>{phase === 1 ? P1 : P2}</span>
        </Content>
      </Cell>
      <Cell $bg={LIGHT}><Content $h={h} $size={10} $bold><Mixed text={capability} latin={12} /></Content></Cell>
      <Cell $bg={LIGHT}><Content $h={h} $size={12} $bold $left><Mixed text={recommendation} latin={13} /></Content></Cell>
      <Cell $bg={LIGHT}>
        <Content $h={h} $size={11} $bold $wrap>
          {service.startsWith("GD") ? <a href="#protection-plans">{service}</a> : service}
        </Content>
      </Cell>
      <Cell $bg={LIGHT} $fg="#000"><Content $h={h} $size={14} $bold><a href={`#r${n}`}>Link</a></Content></Cell>
      <Cell $fg="#000"><Content $h={h} $size={14}>{"--  Select an option --"}</Content></Cell>
      <Cell $fg="#000">
        {selected && <CellDropdown aria-label="選択肢を表示"><Triangle /></CellDropdown>}
        <Content $h={h} $size={17}>0%</Content>
      </Cell>
      <Cell /><Cell /><Blank /><Blank /><Blank />
    </tr>
  );
}

function Sheet() {
  return (
    <SheetArea>
      <Grid>
        <colgroup>
          <col width={20} />
          {columns.map(([c, w]) => <col key={c} width={w} />)}
        </colgroup>
        <thead>
          <tr>
            <Corner aria-label="すべて選択"><Svg w={14} h={13}><path d="M14 0v13H0z" fill="#dedede" stroke="none" /></Svg></Corner>
            {columns.map(([c]) => c === "E"
              ? <HiddenEdge key={c}>{c}</HiddenEdge>
              : <ColHead key={c} $on={c === "I"}>{c}</ColHead>)}
          </tr>
          <tr>
            <RowHead scope="row">1</RowHead>
            <HeadCell />
            {headings.map(([text, center, size], i) => (
              <HeadCell key={i} $center={center} $size={size}>{text}<FilterButton aria-label="フィルター"><Triangle /></FilterButton></HeadCell>
            ))}
            <Blank $head /><Blank $head /><Blank $head />
          </tr>
        </thead>
        <tbody>{items.map((item, i) => <DataRow key={i} item={item} n={i + 2} />)}</tbody>
      </Grid>
    </SheetArea>
  );
}

const Chev = () => <Tool $w={16} aria-label="その他"><Chevron /></Tool>;

function RibbonBar() {
  return (
    <Ribbon>
      <Group $w={138} $pad={6}>
        <BigButton $w={54}><BigIcon><PasteIcon /><Chevron /></BigIcon>ペースト</BigButton>
        <Stack $w={76}>
          <StackItem><CutIcon />切り取り</StackItem>
          <StackItem><CopyIcon />コピー<Chevron /></StackItem>
          <StackItem><BrushIcon />書式</StackItem>
        </Stack>
      </Group>
      <Group $w={306} $pad={11}>
        <Rows>
          <Row $gap={4}>
            <Picker $w={175}><select aria-label="フォント"><option>Meiryo UI</option></select><Chevron /></Picker>
            <Picker $w={52}><select aria-label="フォント サイズ"><option>14</option></select><Chevron /></Picker>
            <Tool $w={22} aria-label="拡大"><FontStep up /></Tool>
            <Tool $w={24} aria-label="縮小"><FontStep /></Tool>
          </Row>
          <Row>
            <Tool $w={22}><Letter $k="b">B</Letter></Tool>
            <Tool $w={28}><Letter $k="i">I</Letter></Tool>
            <Tool $w={22}><Letter $k="u">U</Letter></Tool>
            <Chev /><Sep />
            <Tool $w={27} aria-label="罫線"><BorderIcon /></Tool><Tool $w={12} aria-label="罫線の種類"><Chevron /></Tool><Sep />
            <Tool $w={28} aria-label="塗りつぶし"><FillIcon /></Tool><Tool $w={12} aria-label="塗りつぶしの色"><Chevron /></Tool>
            <Tool $w={26} aria-label="文字色"><FontColorIcon /></Tool><Chev /><Sep />
            <Tool $w={25}><TextStyle>abc<i>A</i></TextStyle></Tool><Chev />
          </Row>
        </Rows>
      </Group>
      <Group $w={162} $pad={10}>
        <Rows>
          <Row $gap={2}>
            <Tool $w={24} aria-label="上揃え"><Lines rows={[[0, 14], [2, 12], [0, 14]]} ys={[1.5, 5.5, 9.5]} /></Tool>
            <Tool $w={24} $on aria-label="上下中央"><Lines rows={[[0, 14], [2, 12], [0, 14]]} ys={[3.5, 7.5, 12.5]} /></Tool>
            <Tool $w={24} aria-label="下揃え"><Lines rows={[[0, 14], [2, 12], [0, 14]]} ys={[7.5, 11.5, 15.5]} /></Tool>
            <Sep />
            <Tool $w={24} aria-label="方向"><OrientIcon /></Tool><Tool $w={12} aria-label="方向の種類"><Chevron /></Tool>
          </Row>
          <Row $gap={2}>
            <Tool $w={24} aria-label="左揃え"><Lines rows={[[0, 14], [0, 9], [0, 14], [0, 9]]} ys={[1.5, 5.5, 9.5, 13.5]} /></Tool>
            <Tool $w={24} $on aria-label="中央揃え"><Lines rows={[[0, 14], [2, 12], [0, 14], [2, 12]]} ys={[1.5, 5.5, 9.5, 13.5]} /></Tool>
            <Tool $w={24} aria-label="右揃え"><Lines rows={[[0, 14], [5, 14], [0, 14], [5, 14]]} ys={[1.5, 5.5, 9.5, 13.5]} /></Tool>
            <Sep />
            <Tool $w={24} aria-label="インデント解除"><IndentIcon out /></Tool>
            <Tool $w={24} aria-label="インデント"><IndentIcon /></Tool>
          </Row>
        </Rows>
      </Group>
      <Group $w={176} $pad={8}>
        <Rows>
          <Row><WrapButton><WrapIcon />折り返して全体を表示する</WrapButton><Tool $w={12} aria-label="折り返しの種類"><Chevron /></Tool></Row>
          <Row><MergeButton><MergeIcon />セルを結合して中央揃え<Chevron /></MergeButton></Row>
        </Rows>
      </Group>
      <Group $w={176} $pad={11}>
        <Rows>
          <Row><Picker $w={153}><select aria-label="表示形式"><option>標準</option></select><Chevron /></Picker></Row>
          <Row>
            <Tool $w={22} aria-label="通貨"><MoneyIcon /></Tool><Tool $w={14} aria-label="通貨の種類"><Chevron /></Tool>
            <Tool $w={26} aria-label="パーセント"><PercentIcon /></Tool>
            <Tool $w={26} aria-label="桁区切り"><CommaIcon /></Tool>
            <Sep />
            <Tool $w={30} aria-label="小数点以下を増やす"><DecimalIcon /></Tool>
            <Tool $w={23} aria-label="小数点以下を減らす"><DecimalIcon less /></Tool>
          </Row>
        </Rows>
      </Group>
      <Group $w={344} $pad={8}>
        <BigButton $w={54}><BigIcon><CondIcon /><Chevron /></BigIcon>条件付き<br />書式</BigButton>
        <BigButton $w={63}><BigIcon><TableIcon /><Chevron /></BigIcon>テーブルと<br />して書式設定</BigButton>
        <Gallery>
          <Swatches>
            <Swatch $bg="#fff" $fg="#555" $picked>標準</Swatch>
            <Swatch $bg="#fff0bd" $fg="#b58d50">どちらでもない</Swatch>
            <Swatch $bg="#fdd8df" $fg="#c0505c">悪い</Swatch>
            <Swatch $bg="#d9f3de" $fg="#4c9359">良い</Swatch>
          </Swatches>
          <GalleryNext aria-label="次へ"><Svg w={6} h={8}><path d="M1.500 1.200 4.500 4l-3 2.800" strokeWidth="1.700" /></Svg></GalleryNext>
        </Gallery>
      </Group>
      <Group $w={169} $pad={8}>
        <BigButton $w={52}><BigIcon><InsertIcon /><Chevron /></BigIcon>挿入</BigButton>
        <BigButton $w={50}><BigIcon><DeleteIcon /><Chevron /></BigIcon>削除</BigButton>
        <BigButton $w={50}><BigIcon><FormatIcon /><Chevron /></BigIcon>書式</BigButton>
      </Group>
      <Group $w={222} $pad={13}>
        <Stack $w={96}>
          <StackItem><SumIcon />オート SUM<Chevron /></StackItem>
          <StackItem><FillDownIcon />フィル<Chevron /></StackItem>
          <StackItem><ClearIcon />クリア<Chevron /></StackItem>
        </Stack>
        <BigButton $w={52}><BigIcon><SortIcon /><Chevron /></BigIcon>並べ替えと<br />フィルター</BigButton>
        <BigButton $w={54}><BigIcon><FindIcon /><Chevron /></BigIcon>検索と<br />選択</BigButton>
      </Group>
      <Group $w={69} $pad={10}>
        <BigButton $w={52} $off><BigIcon><SensitivityIcon /><Chevron /></BigIcon>秘密度</BigButton>
      </Group>
      <Group $w={57} $pad={8}>
        <BigButton $w={40}><BigIcon><AddinIcon /></BigIcon>アド<br />イン</BigButton>
      </Group>
      <Group $pad={8}>
        <BigButton $w={40}><BigIcon><AnalyzeIcon /></BigIcon>データ<br />の分析</BigButton>
      </Group>
    </Ribbon>
  );
}

export default function App() {
  return (
    <Window>
      <GlobalStyle />
      <TitleBar>
        <QuickAccess>
          <AutoSave>自動保存<Toggle type="checkbox" /></AutoSave>
          <IconButton aria-label="ホーム"><HomeIcon /></IconButton>
          <IconButton aria-label="保存"><SaveIcon /></IconButton>
          <IconButton aria-label="名前を付けて保存"><SaveEditIcon /></IconButton>
          <FaintButton aria-label="元に戻す"><UndoIcon /></FaintButton>
          <IconButton aria-label="履歴"><Chevron /></IconButton>
          <FaintButton aria-label="やり直し"><RedoIcon /></FaintButton>
          <IconButton aria-label="その他"><DotsIcon /></IconButton>
        </QuickAccess>
        <FileTitle><FileIcon />aws-security-maturity-model-assessment-tool-excel.v6.jp<Chevron /></FileTitle>
        <TitleRight>
          <SearchBox><SearchIcon /><input type="text" aria-label="Search" placeholder="Search (Cmd + Ctrl + U)" /></SearchBox>
          <IconButton aria-label="共同編集"><PeopleIcon /></IconButton>
        </TitleRight>
      </TitleBar>
      <TabRow>
        <RibbonTabs>
          {["ホーム", "挿入", "描画", "ページ レイアウト", "数式", "データ", "校閲", "表示", "自動化"].map((t, i) => (
            <RibbonTab key={t} $active={i === 0}>{t}</RibbonTab>
          ))}
        </RibbonTabs>
        <TabActions>
          <ActionButton><CommentIcon />コメント</ActionButton>
          <ActionButton><ShareIcon />共有<Chevron /></ActionButton>
        </TabActions>
      </TabRow>
      <RibbonBar />
      <FormulaBar>
        <NameBox><input type="text" aria-label="名前ボックス" defaultValue="I5" /><Spinner /></NameBox>
        <FormulaTools>
          <Tool $w={30} aria-label="キャンセル"><CancelIcon /></Tool>
          <Tool $w={30} aria-label="入力"><EnterIcon /></Tool>
          <Tool $w={18}><Fx>fx</Fx></Tool>
          <Tool $w={12} aria-label="関数"><Chevron /></Tool>
        </FormulaTools>
        <FormulaInput type="text" aria-label="数式バー" defaultValue="--  Select an option --" />
        <Expand aria-label="展開"><Triangle /></Expand>
      </FormulaBar>
      <Sheet />
      <SheetTabs>
        <TabArrows>
          <IconButton aria-label="前のシート"><Arrow back /></IconButton>
          <IconButton aria-label="次のシート"><Arrow /></IconButton>
        </TabArrows>
        <SheetTab $w={103}>Instructions</SheetTab>
        <SheetTab $w={78} $active>Data</SheetTab>
        <SheetTab $w={80}>Results</SheetTab>
        <SheetTab $w={79}>Charts</SheetTab>
        <SheetTab $w={38} aria-label="シートを追加"><PlusIcon /></SheetTab>
      </SheetTabs>
      <StatusBar>
        <StatusLeft>
          <span>準備完了</span>
          <button><A11yIcon />アクセシビリティ: 検討が必要です</button>
        </StatusLeft>
        <StatusRight>
          <ViewButton $on aria-label="標準表示"><GridViewIcon /></ViewButton>
          <ViewButton aria-label="ページ レイアウト表示"><PageViewIcon /></ViewButton>
          <ViewButton aria-label="改ページ プレビュー"><BreakViewIcon /></ViewButton>
          <IconButton aria-label="縮小"><MinusIcon /></IconButton>
          <ZoomSlider type="range" min={0} max={100} defaultValue={46} aria-label="ズーム" />
          <IconButton aria-label="拡大"><PlusIcon s={8} /></IconButton>
          <ZoomValue>93%</ZoomValue>
        </StatusRight>
      </StatusBar>
    </Window>
  );
}
